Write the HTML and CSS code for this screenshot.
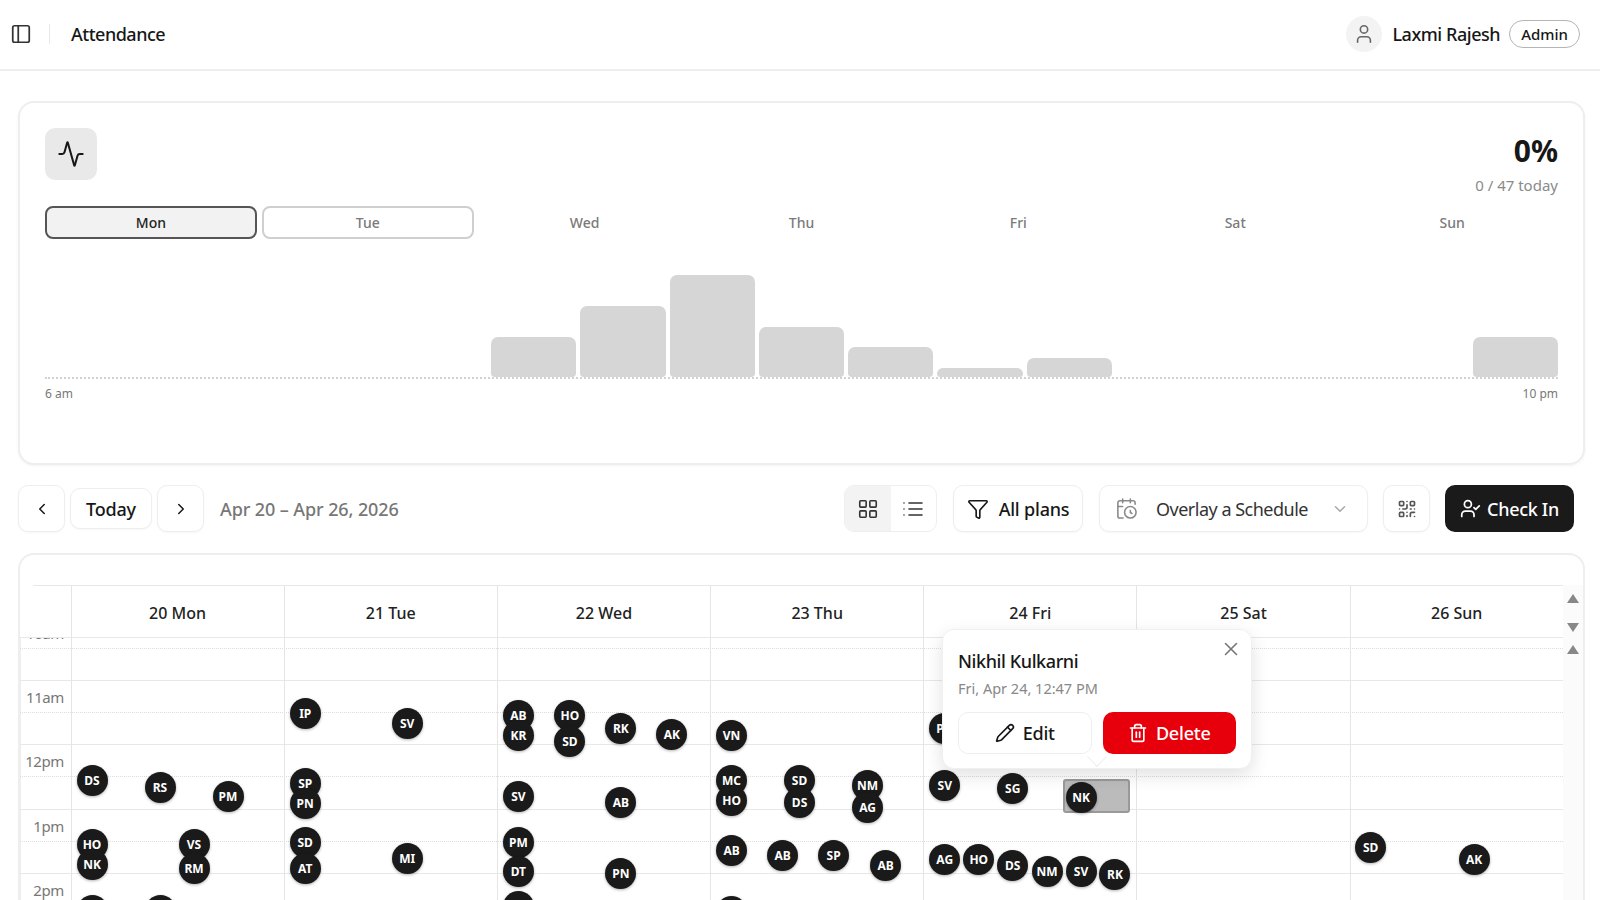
FILE: index.html
```html
<!DOCTYPE html>
<html lang="en">
<head>
<meta charset="utf-8">
<title>Attendance</title>
<link rel="stylesheet" href="styles.css">
</head>
<body>
<header class="topbar">
  <svg class="ic sidebar-ic" viewBox="0 0 24 24"><rect x="3" y="3" width="18" height="18" rx="2"/><path d="M9 3v18"/></svg>
  <span class="topbar-sep"></span>
  <h1 class="page-title">Attendance</h1>
  <div class="user">
    <span class="user-avatar"><svg class="ic ic-22" viewBox="0 0 24 24"><path d="M19 21v-2a4 4 0 0 0-4-4H9a4 4 0 0 0-4 4v2"/><circle cx="12" cy="7" r="4"/></svg></span>
    <span class="user-name">Laxmi Rajesh</span>
    <span class="role-pill">Admin</span>
  </div>
</header>
<main class="main">
  <section class="card stats">
    <div class="stats-top">
      <span class="activity-box"><svg class="ic ic-28" viewBox="0 0 24 24"><path d="M22 12h-2.48a2 2 0 0 0-1.93 1.46l-2.35 8.36a.25.25 0 0 1-.48 0L9.24 2.18a.25.25 0 0 0-.48 0l-2.35 8.36A2 2 0 0 1 4.49 12H2"/></svg></span>
      <div class="stats-figure">
        <div class="percent">0%</div>
        <div class="percent-sub">0 / 47 today</div>
      </div>
    </div>
    <div class="day-tabs">
      <span class="day-tab day-tab-active">Mon</span>
      <span class="day-tab day-tab-open">Tue</span>
      <span class="day-tab">Wed</span>
      <span class="day-tab">Thu</span>
      <span class="day-tab">Fri</span>
      <span class="day-tab">Sat</span>
      <span class="day-tab">Sun</span>
    </div>
    <div class="chart">
      <span></span><span></span><span></span><span></span><span></span>
      <span class="bar" style="height:40px"></span>
      <span class="bar" style="height:71px"></span>
      <span class="bar" style="height:102px"></span>
      <span class="bar" style="height:50px"></span>
      <span class="bar" style="height:30px"></span>
      <span class="bar" style="height:9px"></span>
      <span class="bar" style="height:19px"></span>
      <span></span><span></span><span></span><span></span>
      <span class="bar" style="height:40px"></span>
    </div>
    <div class="chart-axis"><span>6 am</span><span>10 pm</span></div>
  </section>

  <section class="toolbar">
    <button class="btn btn-square"><svg class="ic ic-18" viewBox="0 0 24 24"><path d="m15 18-6-6 6-6"/></svg></button>
    <button class="btn btn-today">Today</button>
    <button class="btn btn-square"><svg class="ic ic-18" viewBox="0 0 24 24"><path d="m9 18 6-6-6-6"/></svg></button>
    <span class="date-range">Apr 20 – Apr 26, 2026</span>
    <div class="toolbar-right">
      <div class="view-toggle">
        <span class="view-btn view-btn-on"><svg class="ic ic-22" viewBox="0 0 24 24"><rect x="3" y="3" width="7" height="7" rx="1"/><rect x="14" y="3" width="7" height="7" rx="1"/><rect x="14" y="14" width="7" height="7" rx="1"/><rect x="3" y="14" width="7" height="7" rx="1"/></svg></span>
        <span class="view-btn"><svg class="ic ic-24" viewBox="0 0 24 24"><path d="M3 12h.01M3 18h.01M3 6h.01M8 12h13M8 18h13M8 6h13"/></svg></span>
      </div>
      <button class="btn btn-plans"><svg class="ic ic-22" viewBox="0 0 24 24"><path d="M10 20a1 1 0 0 0 .553.895l2 1A1 1 0 0 0 14 21v-7a2 2 0 0 1 .517-1.341L21.74 4.67A1 1 0 0 0 21 3H3a1 1 0 0 0-.742 1.67l7.225 7.989A2 2 0 0 1 10 14z"/></svg>All plans</button>
      <button class="btn btn-overlay">
        <svg class="ic ic-23 ic-muted" viewBox="0 0 24 24"><path d="M16 14v2.2l1.6 1"/><path d="M16 2v4"/><path d="M21 7.5V6a2 2 0 0 0-2-2H5a2 2 0 0 0-2 2v14a2 2 0 0 0 2 2h3.5"/><path d="M3 10h5"/><path d="M8 2v4"/><circle cx="16" cy="16" r="6"/></svg>
        <span class="overlay-label">Overlay a Schedule</span>
        <svg class="ic ic-18 ic-faint" viewBox="0 0 24 24"><path d="m6 9 6 6 6-6"/></svg>
      </button>
      <button class="btn btn-square btn-qr"><svg class="ic ic-20 ic-dim" viewBox="0 0 24 24"><rect x="3" y="3" width="5" height="5" rx="1"/><rect x="16" y="3" width="5" height="5" rx="1"/><rect x="3" y="16" width="5" height="5" rx="1"/><path d="M21 16h-3a2 2 0 0 0-2 2v3"/><path d="M21 21v.01"/><path d="M12 7v3a2 2 0 0 1-2 2H7"/><path d="M3 12h.01"/><path d="M12 3h.01"/><path d="M12 16v.01"/><path d="M16 12h1"/><path d="M21 12v.01"/><path d="M12 21v-1"/></svg></button>
      <button class="btn-checkin"><svg class="ic ic-21" viewBox="0 0 24 24"><path d="M16 21v-2a4 4 0 0 0-4-4H6a4 4 0 0 0-4 4v2"/><circle cx="9" cy="7" r="4"/><path d="m16 11 2 2 4-4"/></svg>Check In</button>
    </div>
  </section>

  <section class="card calendar">
    <div class="cal-head">
      <span class="cal-corner"></span>
      <span class="cal-day">20 Mon</span>
      <span class="cal-day">21 Tue</span>
      <span class="cal-day">22 Wed</span>
      <span class="cal-day">23 Thu</span>
      <span class="cal-day">24 Fri</span>
      <span class="cal-day">25 Sat</span>
      <span class="cal-day">26 Sun</span>
    </div>
    <div class="cal-body">
      <div class="hours">
        <div class="hour"><div class="half"><span class="time">10am</span></div></div>
        <div class="hour"><div class="half"><span class="time">11am</span></div></div>
        <div class="hour"><div class="half"><span class="time">12pm</span></div></div>
        <div class="hour"><div class="half"><span class="time">1pm</span></div></div>
        <div class="hour"><div class="half"><span class="time">2pm</span></div></div>
        <div class="hour"><div class="half"><span class="time">3pm</span></div></div>
      </div>
      <div class="day-cols">
        <div class="day-col">
          <span class="pin" style="left:5px;top:126.5px">DS</span>
          <span class="pin" style="left:73px;top:133.5px">RS</span>
          <span class="pin" style="left:141px;top:142.5px">PM</span>
          <span class="pin" style="left:5px;top:190.5px">HO</span>
          <span class="pin" style="left:5px;top:210.5px">NK</span>
          <span class="pin" style="left:107px;top:190.5px">VS</span>
          <span class="pin" style="left:107px;top:214.5px">RM</span>
          <span class="pin" style="left:5px;top:256.5px">SK</span>
          <span class="pin" style="left:73px;top:256.5px">AT</span>
        </div>
        <div class="day-col">
          <span class="pin" style="left:5px;top:59.5px">IP</span>
          <span class="pin" style="left:107px;top:69.5px">SV</span>
          <span class="pin" style="left:5px;top:129.5px">SP</span>
          <span class="pin" style="left:5px;top:149.5px">PN</span>
          <span class="pin" style="left:5px;top:188.5px">SD</span>
          <span class="pin" style="left:5px;top:214.5px">AT</span>
          <span class="pin" style="left:107px;top:204.5px">MI</span>
        </div>
        <div class="day-col">
          <span class="pin" style="left:5px;top:61.5px">AB</span>
          <span class="pin" style="left:5px;top:81.5px">KR</span>
          <span class="pin" style="left:56.5px;top:61.5px">HO</span>
          <span class="pin" style="left:56.5px;top:87.5px">SD</span>
          <span class="pin" style="left:107.5px;top:74.5px">RK</span>
          <span class="pin" style="left:158.5px;top:80.5px">AK</span>
          <span class="pin" style="left:5px;top:142.5px">SV</span>
          <span class="pin" style="left:107.5px;top:148.5px">AB</span>
          <span class="pin" style="left:5px;top:188.5px">PM</span>
          <span class="pin" style="left:5px;top:217.5px">DT</span>
          <span class="pin" style="left:107.5px;top:219.5px">PN</span>
          <span class="pin" style="left:5px;top:252.5px">RK</span>
        </div>
        <div class="day-col">
          <span class="pin" style="left:5px;top:81.5px">VN</span>
          <span class="pin" style="left:5px;top:126.5px">MC</span>
          <span class="pin" style="left:5px;top:146.5px">HO</span>
          <span class="pin" style="left:73px;top:126.5px">SD</span>
          <span class="pin" style="left:73px;top:148.5px">DS</span>
          <span class="pin" style="left:141px;top:131.5px">NM</span>
          <span class="pin" style="left:141px;top:153.5px">AG</span>
          <span class="pin" style="left:5px;top:196.5px">AB</span>
          <span class="pin" style="left:56px;top:201.5px">AB</span>
          <span class="pin" style="left:107px;top:201.5px">SP</span>
          <span class="pin" style="left:159px;top:211.5px">AB</span>
          <span class="pin" style="left:5px;top:257.5px">SV</span>
        </div>
        <div class="day-col">
          <span class="selected-slot"></span>
          <span class="pin" style="left:5px;top:74.5px">PN</span>
          <span class="pin" style="left:5px;top:131.5px">SV</span>
          <span class="pin" style="left:73px;top:134.5px">SG</span>
          <span class="pin" style="left:141.3px;top:143.5px">NK</span>
          <span class="pin" style="left:5px;top:205.5px">AG</span>
          <span class="pin" style="left:39px;top:205.5px">HO</span>
          <span class="pin" style="left:73px;top:211.5px">DS</span>
          <span class="pin" style="left:107.4px;top:217.5px">NM</span>
          <span class="pin" style="left:141.3px;top:217.5px">SV</span>
          <span class="pin" style="left:175.2px;top:220.5px">RK</span>
        </div>
        <div class="day-col"></div>
        <div class="day-col">
          <span class="pin" style="left:4.5px;top:193.5px">SD</span>
          <span class="pin" style="left:108px;top:205.5px">AK</span>
        </div>
      </div>
    </div>
    <div class="scroll-gutter">
      <span class="arrow arrow-up arrow-a"></span>
      <span class="arrow arrow-down arrow-b"></span>
      <span class="arrow arrow-up arrow-c"></span>
    </div>
    <div class="popover">
      <svg class="ic ic-22 popover-close" viewBox="0 0 24 24"><path d="M18 6 6 18"/><path d="m6 6 12 12"/></svg>
      <div class="popover-name">Nikhil Kulkarni</div>
      <div class="popover-time">Fri, Apr 24, 12:47 PM</div>
      <div class="popover-actions">
        <button class="pop-btn pop-edit"><svg class="ic ic-20" viewBox="0 0 24 24"><path d="M21.174 6.812a1 1 0 0 0-3.986-3.987L3.842 16.174a2 2 0 0 0-.5.83l-1.321 4.352a.5.5 0 0 0 .623.622l4.353-1.32a2 2 0 0 0 .83-.497z"/><path d="m15 5 4 4"/></svg>Edit</button>
        <button class="pop-btn pop-delete"><svg class="ic ic-20" viewBox="0 0 24 24"><path d="M3 6h18"/><path d="M19 6v14c0 1-1 2-2 2H7c-1 0-2-1-2-2V6"/><path d="M8 6V4c0-1 1-2 2-2h4c1 0 2 1 2 2v2"/><path d="M10 11v6"/><path d="M14 11v6"/></svg>Delete</button>
      </div>
      <span class="popover-tip"></span>
    </div>
  </section>
</main>
</body>
</html>
```
FILE: styles.css
```css
* { box-sizing: border-box; }
html, body { margin: 0; height: 900px; overflow: hidden; }
body { background: #fff; color: #171717; font-family: "Noto Sans", "Open Sans", sans-serif; }
button { font-family: inherit; cursor: pointer; }

.ic { fill: none; stroke: currentColor; stroke-width: 2; stroke-linecap: round; stroke-linejoin: round; flex: none; display: block; }
.ic-18 { width: 18px; height: 18px; }
.ic-20 { width: 20px; height: 20px; }
.ic-21 { width: 21px; height: 21px; }
.ic-22 { width: 22px; height: 22px; stroke-width: 1.75; }
.ic-23 { width: 23px; height: 23px; stroke-width: 1.65; }
.ic-24 { width: 24px; height: 24px; stroke-width: 1.6; }
.ic-28 { width: 28px; height: 28px; stroke-width: 1.75; }
.ic-muted { color: #8a8a8a; }
.ic-faint { color: #a8a8a8; }
.ic-dim { color: #555; }

.topbar { height: 71px; border-bottom: 2px solid #eee; display: flex; align-items: center; padding: 0 20px 2px 10px; }
.sidebar-ic { width: 22px; height: 22px; color: #333; stroke-width: 1.9; }
.topbar-sep { width: 1px; height: 20px; background: #e8e8e8; margin: 0 21px 0 17px; }
.page-title { font-size: 18px; font-weight: 500; margin: 0; letter-spacing: -0.5px; }
.user { margin-left: auto; display: flex; align-items: center; }
.user-avatar { width: 36px; height: 36px; border-radius: 50%; background: #f3f3f3; color: #666; display: flex; align-items: center; justify-content: center; }
.user-name { font-size: 18px; font-weight: 500; margin: 0 9px 0 10px; letter-spacing: -0.45px; }
.role-pill { height: 28px; padding: 0 11px; border: 1.5px solid #b5b5b5; border-radius: 14px; font-size: 15px; font-weight: 500; display: flex; align-items: center; }

.main { padding: 30px 15px 0 18px; }
.card { background: #fff; border: 2px solid #eee; border-radius: 16px; }

.stats { height: 364px; padding: 25px 25px 0; box-shadow: 0 1px 3px rgba(0,0,0,.05); }
.stats-top { display: flex; justify-content: space-between; height: 78px; }
.activity-box { width: 52px; height: 52px; border-radius: 10px; background: #e9e9e9; display: flex; align-items: center; justify-content: center; }
.stats-figure { text-align: right; }
.percent { font-size: 30px; font-weight: 700; line-height: 46px; }
.percent-sub { font-size: 15px; color: #8a8a8a; line-height: 22px; }

.day-tabs { display: grid; grid-template-columns: repeat(7, 1fr); gap: 5px; }
.day-tab { height: 33px; border-radius: 8px; font-size: 14px; font-weight: 500; color: #7a7a7a; display: flex; align-items: center; justify-content: center; border: 2px solid transparent; }
.day-tab-active { border-color: #555; background: #f2f2f2; color: #222; }
.day-tab-open { border-color: #cfcfcf; }

.chart { height: 140px; display: grid; grid-template-columns: repeat(17, 1fr); column-gap: 4px; align-items: end; border-bottom: 2px dotted #d2d2d2; }
.bar { background: #d6d6d6; border-radius: 7px 7px 4px 4px; }
.chart-axis { display: flex; justify-content: space-between; font-size: 12px; color: #777; margin-top: 6px; line-height: 18px; }

.toolbar { height: 47px; margin-top: 20px; margin-right: 11px; display: flex; align-items: center; gap: 5px; }
.btn { height: 47px; background: #fff; border: 1.5px solid #eee; border-radius: 10px; color: #171717; font-size: 18px; font-weight: 500; display: flex; align-items: center; justify-content: center; padding: 0; box-shadow: 0 1px 2px rgba(0,0,0,.04); }
.btn-square { width: 47px; }
.btn-today { width: 82px; height: 41px; letter-spacing: -0.2px; }
.date-range { font-size: 18px; font-weight: 500; color: #777; margin-left: 11px; letter-spacing: -0.1px; }
.toolbar-right { margin-left: auto; display: flex; align-items: center; gap: 16px; }
.view-toggle { display: flex; width: 93px; height: 47px; border-radius: 10px; border: 1.5px solid #eee; overflow: hidden; }
.view-btn { flex: 1; display: flex; align-items: center; justify-content: center; color: #333; }
.view-btn-on { background: #f3f3f3; }
.btn-plans { width: 130px; gap: 10px; letter-spacing: -0.2px; }
.btn-overlay { width: 269px; padding: 0 18px 0 15px; justify-content: flex-start; font-weight: 400; color: #333; }
.overlay-label { margin-left: 18px; flex: 1; text-align: left; letter-spacing: -0.5px; }
.btn-qr { margin-right: -1px; margin-left: -1px; }
.btn-checkin { width: 129px; height: 47px; background: #1a1a1a; color: #fff; border: 0; border-radius: 10px; font-size: 18px; font-weight: 500; display: flex; align-items: center; justify-content: center; gap: 6px; padding: 0; letter-spacing: -0.3px; }

.calendar { position: relative; margin-top: 21px; height: 400px; padding-top: 30px; overflow: hidden; }
.calendar::before { content: ""; position: absolute; left: 13px; top: 30px; width: 1537px; height: 1px; background: #e8e8e8; }
.cal-head { display: grid; grid-template-columns: 50.5px repeat(7, 213.2px); height: 53px; width: 1543px; padding-top: 1px; border-bottom: 1px solid #e8e8e8; }
.cal-corner { display: block; }
.cal-day { border-left: 1px solid #e5e5e5; font-size: 16px; font-weight: 500; display: flex; align-items: center; justify-content: center; color: #222; padding-top: 3px; }
.cal-body { position: relative; width: 1543px; height: 340px; overflow: hidden; box-shadow: inset 1px 0 #eee; }
.hours { margin-top: -21.33px; }
.hour { height: 64.33px; border-bottom: 1px solid #e8e8e8; }
.half { height: 32px; border-bottom: 1px dotted #ddd; }
.time { display: block; width: 44px; padding-top: 6px; line-height: 20px; text-align: right; font-size: 15px; color: #777; letter-spacing: -0.4px; }
.day-cols { position: absolute; inset: 0 0 0 50.5px; display: grid; grid-template-columns: repeat(7, 213.2px); }
.day-col { position: relative; border-left: 1px solid #e5e5e5; }
.pin { position: absolute; width: 31px; height: 31px; border-radius: 50%; background: #1a1a1a; color: #fff; font-size: 12px; font-weight: 700; display: flex; align-items: center; justify-content: center; box-shadow: 0 1px 3px rgba(0,0,0,.3); }
.selected-slot { position: absolute; left: 139px; top: 141px; width: 67px; height: 34px; background: #bbb; border: 2px solid #999; border-radius: 3px; }

.scroll-gutter { position: absolute; left: 1543px; top: 30px; bottom: 0; width: 20px; background: #fbfbfb; }
.arrow { position: absolute; left: 4px; width: 0; height: 0; border-left: 6px solid transparent; border-right: 6px solid transparent; }
.arrow-up { border-bottom: 9px solid #888; }
.arrow-down { border-top: 9px solid #888; }
.arrow-a { top: 9px; }
.arrow-b { top: 38px; }
.arrow-c { top: 60px; }

.popover { position: absolute; left: 922px; top: 74px; width: 310px; height: 140px; background: #fff; border: 1px solid #f0f0f0; border-radius: 12px; box-shadow: 0 6px 18px rgba(0,0,0,.12); padding: 18px 15px 0; z-index: 5; }
.popover-close { position: absolute; right: 9px; top: 8px; color: #777; }
.popover-name { font-size: 18px; font-weight: 500; line-height: 26px; letter-spacing: -0.4px; }
.popover-time { font-size: 14.5px; color: #888; line-height: 22px; margin-top: 3px; }
.popover-actions { display: flex; gap: 11px; margin-top: 13px; }
.pop-btn { width: 134px; height: 42px; border-radius: 10px; font-size: 18px; font-weight: 500; display: flex; align-items: center; justify-content: center; gap: 8px; padding: 0; letter-spacing: -0.2px; }
.pop-edit { background: #fff; border: 1.5px solid #eee; color: #171717; }
.pop-delete { background: #e7000b; border: 0; color: #fff; }
.popover-tip { position: absolute; left: 147px; bottom: 4px; width: 14px; height: 14px; transform: rotate(45deg); background: #fff; border-right: 1px solid #eee; border-bottom: 1px solid #eee; }
```
